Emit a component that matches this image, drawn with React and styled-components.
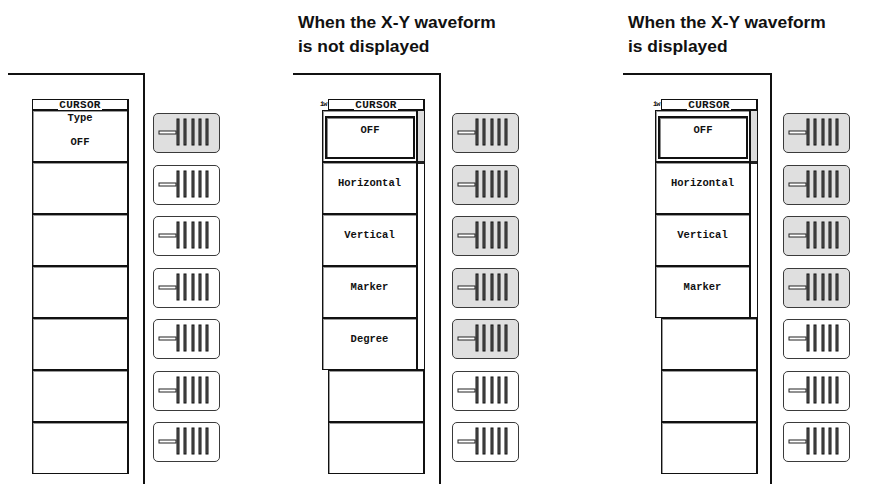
import React from "react";
import styled, { createGlobalStyle } from "styled-components";

const GlobalStyle = createGlobalStyle`
  html, body {
    margin: 0;
    padding: 0;
    background: #fff;
  }
  body {
    width: 875px;
    height: 484px;
    overflow: hidden;
  }
`;

const Page = styled.div`
  display: flex;
  align-items: flex-start;
  padding-left: 8px;
  height: 484px;
  font-family: "Liberation Sans", Arial, sans-serif;
  color: #111;
`;

const Panel = styled.section`
  display: flex;
  flex-direction: column;
  margin-left: ${(p) => p.$offset || 0}px;
`;

const Caption = styled.h2`
  box-sizing: border-box;
  height: 73px;
  margin: 0 0 0 5px;
  padding-top: 10px;
  font-size: 17.4px;
  line-height: 24px;
  font-weight: bold;
  white-space: nowrap;
`;

const Row = styled.div`
  display: flex;
  align-items: flex-start;
`;

const Frame = styled.div`
  box-sizing: border-box;
  width: ${(p) => p.$width}px;
  height: 420px;
  border-top: 2px solid #111;
  border-right: 2px solid #111;
  display: flex;
  justify-content: flex-end;
  padding: 24px ${(p) => p.$inset}px 0 0;
`;

const Menu = styled.div`
  display: flex;
  flex-direction: column;
  width: ${(p) => p.$width}px;
  font-family: "Liberation Mono", "DejaVu Sans Mono", monospace;
  font-weight: bold;
`;

const HeaderRow = styled.div`
  display: flex;
  align-items: flex-end;
  height: 11px;
`;

const Tag = styled.span`
  width: 8px;
  margin-left: -2px;
  font-size: 7px;
  line-height: 7px;
  letter-spacing: -1px;
  padding-bottom: 2px;
`;

const HeaderBox = styled.div`
  flex: 1;
  box-sizing: border-box;
  height: 11px;
  display: flex;
  align-items: flex-end;
  border: 1px solid #111;
  border-right-width: 2px;
  border-bottom: none;
`;

const Rule = styled.span`
  flex: 1;
  border-bottom: 1px solid #111;
`;

const HeaderTitle = styled.span`
  font-size: 11px;
  line-height: 10px;
  padding: 0 1px;
  letter-spacing: 0.3px;
`;

const Block = styled.div`
  display: flex;
  margin-left: ${(p) => p.$shift || 0}px;
`;

const Stack = styled.div`
  display: flex;
  flex-direction: column;
  width: ${(p) => p.$width}px;
`;

const Key = styled.div`
  box-sizing: border-box;
  height: 52px;
  display: flex;
  flex-direction: column;
  align-items: center;
  padding-top: ${(p) => (p.$selected ? 0 : p.$pad ?? 14)}px;
  border: 1px solid #111;
  border-right-width: 2px;
  box-shadow: inset 1px 1px 0 #9a9a9a;
  background: #fff;
  font-size: 10.5px;
  line-height: 12px;
  white-space: pre;
`;

const KeyLines = styled.div`
  display: flex;
  flex-direction: column;
  align-items: center;
  gap: 12px;
`;

const SelectFrame = styled.div`
  box-sizing: border-box;
  align-self: stretch;
  flex: 1;
  margin: 5px 1px 2px 2px;
  padding-top: 6px;
  text-align: center;
  border: 2px solid #111;
  box-shadow: inset 1px 1px 0 #8a8a8a;
`;

const Strip = styled.div`
  box-sizing: border-box;
  width: 7px;
  display: flex;
  flex-direction: column;
  border-top: 1px solid #111;
  border-bottom: 1px solid #111;
  border-right: 1px solid #111;
  background: #fff;
`;

const Thumb = styled.div`
  height: 50px;
  background: #dcdcdc;
  border-bottom: 3px solid #222;
`;

const SoftKeys = styled.div`
  display: flex;
  flex-direction: column;
  gap: 11.5px;
  margin-top: 40px;
  margin-left: ${(p) => p.$gap}px;
`;

const SoftKey = styled.div`
  box-sizing: border-box;
  width: 67px;
  height: 40px;
  border: 1.5px solid #3a3a3a;
  border-radius: 5px;
  background: ${(p) => (p.$lit ? "#dfdfdf" : "#fff")};
  svg {
    display: block;
  }
`;

const BAR_X = [24.5, 31.5, 39.5, 46.5, 53.5];

const SliderIcon = () => (
  <svg width="64" height="37" viewBox="1.5 1.5 64 37">
    <rect x="6.5" y="18.5" width="17" height="3" fill="#fff" stroke="#222" strokeWidth="1" />
    {BAR_X.map((x) => (
      <rect
        key={x}
        x={x}
        y="6.5"
        width="2"
        height="26"
        fill="#666"
        stroke="#111"
        strokeWidth="1"
      />
    ))}
  </svg>
);

const Keys = ({ lit }) => (
  <SoftKeys $gap={lit.gap}>
    {Array.from({ length: 7 }, (_, i) => (
      <SoftKey key={i} $lit={i < lit.count}>
        <SliderIcon />
      </SoftKey>
    ))}
  </SoftKeys>
);

const Header = ({ tag }) => (
  <HeaderRow>
    {tag && <Tag>iw</Tag>}
    <HeaderBox>
      <Rule />
      <HeaderTitle>CURSOR</HeaderTitle>
      <Rule />
    </HeaderBox>
  </HeaderRow>
);

const blanks = (n) => Array.from({ length: n }, (_, i) => <Key key={i} />);

const TypeMenu = () => (
  <Menu $width={97}>
    <Header />
    <Stack $width={97}>
      <Key $pad={1}>
        <KeyLines>
          <span>Type</span>
          <span>OFF</span>
        </KeyLines>
      </Key>
      {blanks(6)}
    </Stack>
  </Menu>
);

const ChoiceMenu = ({ items }) => (
  <Menu $width={103}>
    <Header tag />
    <Block>
      <Stack $width={96}>
        <Key $selected>
          <SelectFrame>OFF</SelectFrame>
        </Key>
        {items.map((label) => (
          <Key key={label}>{label}</Key>
        ))}
      </Stack>
      <Strip>
        <Thumb />
      </Strip>
    </Block>
    <Block $shift={6}>
      <Stack $width={97}>{blanks(6 - items.length)}</Stack>
    </Block>
  </Menu>
);

export default function App() {
  return (
    <Page>
      <GlobalStyle />
      <Panel>
        <Caption />
        <Row>
          <Frame $width={137} $inset={14}>
            <TypeMenu />
          </Frame>
          <Keys lit={{ count: 1, gap: 8 }} />
        </Row>
      </Panel>

      <Panel $offset={73}>
        <Caption>
          When the X-Y waveform
          <br />
          is not displayed
        </Caption>
        <Row>
          <Frame $width={148} $inset={14}>
            <ChoiceMenu items={["Horizontal", "Vertical", "Marker", "Degree"]} />
          </Frame>
          <Keys lit={{ count: 5, gap: 11 }} />
        </Row>
      </Panel>

      <Panel $offset={104}>
        <Caption>
          When the X-Y waveform
          <br />
          is displayed
        </Caption>
        <Row>
          <Frame $width={149} $inset={12}>
            <ChoiceMenu items={["Horizontal", "Vertical", "Marker"]} />
          </Frame>
          <Keys lit={{ count: 4, gap: 11 }} />
        </Row>
      </Panel>
    </Page>
  );
}
